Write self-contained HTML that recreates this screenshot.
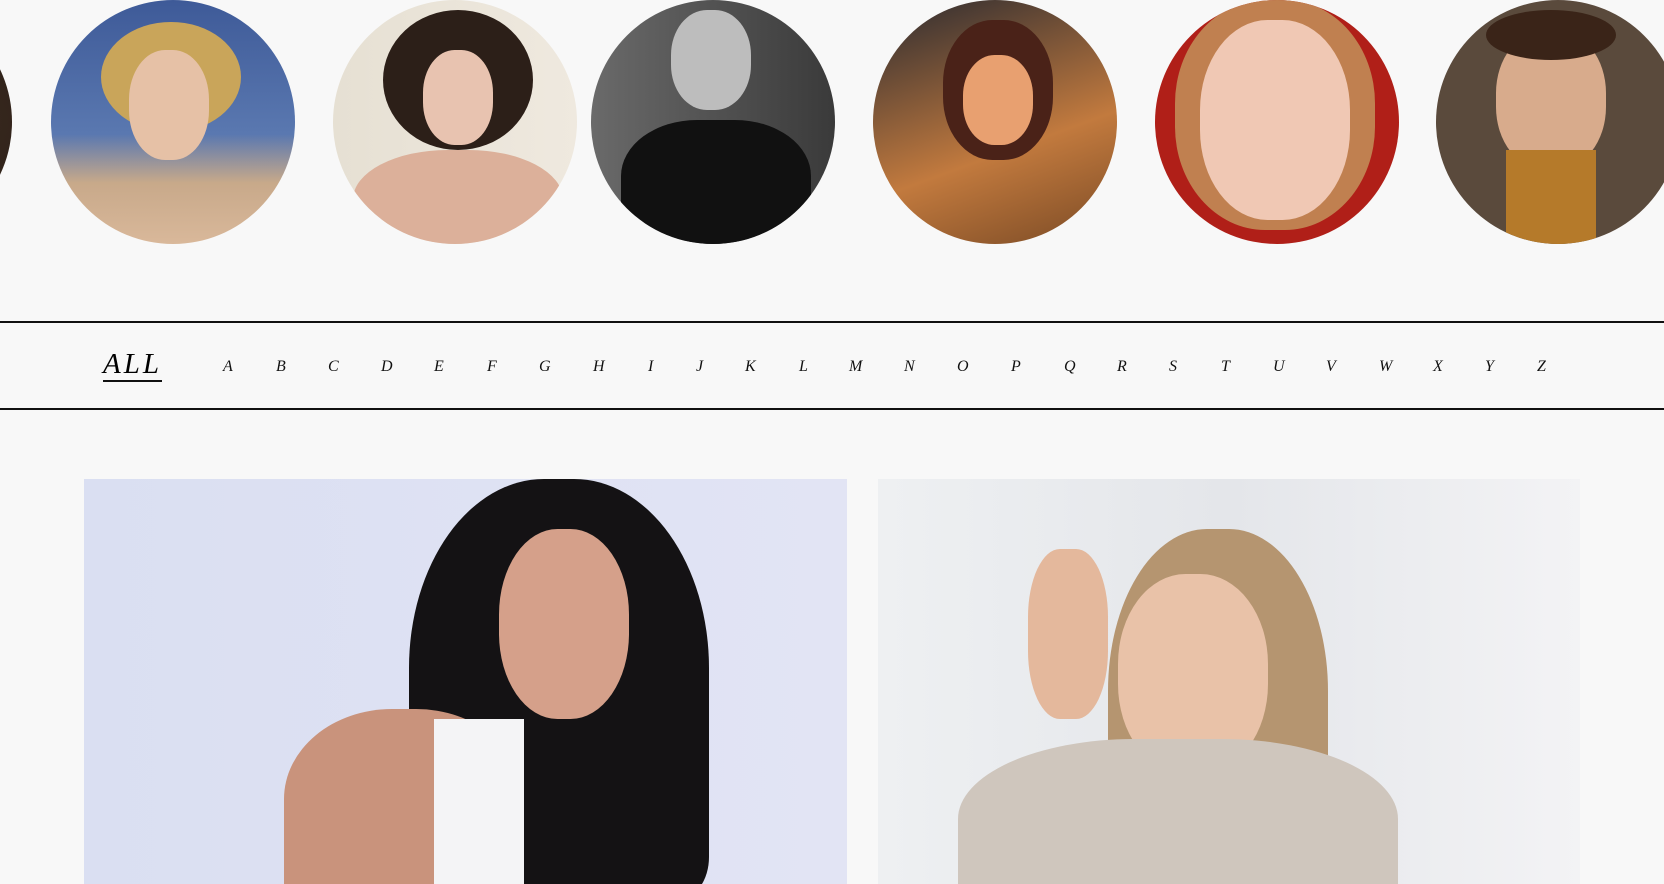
<!DOCTYPE html>
<html><head><meta charset="utf-8"><style>
html,body{margin:0;padding:0;width:1664px;height:884px;overflow:hidden;background:#f8f8f8;font-family:"Liberation Serif",serif;position:relative}
.c{position:absolute;top:0;width:244px;height:244px;border-radius:50%;overflow:hidden}
.line{position:absolute;left:0;width:1664px;height:2px;background:#111}
.nav{position:absolute;top:358px;font-style:italic;font-size:16px;color:#111;line-height:18px}
.all{position:absolute;left:103px;top:348px;font-size:29px;font-style:italic;letter-spacing:3px;border-bottom:2px solid #111;line-height:32px}
.img{position:absolute;top:479px;height:405px;overflow:hidden}
</style></head><body>
<div class="c" style="left:-232px;background:radial-gradient(circle at 80% 50%,#3a2a20,#1a120c)"></div>
<div class="c" style="left:51px;background:linear-gradient(180deg,#3e5a98 0%,#5a78b0 55%,#c8a98a 75%,#d9b89a 100%)">
 <div style="position:absolute;left:50px;top:22px;width:140px;height:110px;border-radius:50%;background:#c9a55a"></div>
 <div style="position:absolute;left:78px;top:50px;width:80px;height:110px;border-radius:45%;background:#e6c1a6"></div></div>
<div class="c" style="left:333px;background:linear-gradient(90deg,#e6e0d3,#efe9df)">
 <div style="position:absolute;left:50px;top:10px;width:150px;height:140px;border-radius:50%;background:#2c1f18"></div>
 <div style="position:absolute;left:90px;top:50px;width:70px;height:95px;border-radius:45%;background:#e8c3b0"></div>
 <div style="position:absolute;left:20px;top:150px;width:210px;height:110px;border-radius:45%;background:#dcb09a"></div></div>
<div class="c" style="left:591px;background:linear-gradient(90deg,#6a6a6a,#3a3a3a)">
 <div style="position:absolute;left:30px;top:120px;width:190px;height:140px;border-radius:40%;background:#111"></div>
 <div style="position:absolute;left:80px;top:10px;width:80px;height:100px;border-radius:45%;background:#bdbdbd"></div></div>
<div class="c" style="left:873px;background:linear-gradient(160deg,#2a2a30,#c27a3e 60%,#7a4a25)">
 <div style="position:absolute;left:70px;top:20px;width:110px;height:140px;border-radius:45%;background:#4a2218"></div>
 <div style="position:absolute;left:90px;top:55px;width:70px;height:90px;border-radius:45%;background:#e8a070"></div></div>
<div class="c" style="left:1155px;background:#b01f18">
 <div style="position:absolute;left:20px;top:0;width:200px;height:230px;border-radius:45%;background:#c08050"></div>
 <div style="position:absolute;left:45px;top:20px;width:150px;height:200px;border-radius:45%;background:#f0c8b4"></div></div>
<div class="c" style="left:1436px;background:#5a4a3c">
 <div style="position:absolute;left:60px;top:30px;width:110px;height:140px;border-radius:45%;background:#d8ab8c"></div>
 <div style="position:absolute;left:50px;top:10px;width:130px;height:50px;border-radius:50%;background:#3a2418"></div>
 <div style="position:absolute;left:70px;top:150px;width:90px;height:100px;background:#b57a2a"></div></div>
<div class="line" style="top:321px"></div>
<div class="line" style="top:408px"></div>
<div class="all">ALL</div>
<div class="nav" style="left:223px">A</div><div class="nav" style="left:276px">B</div><div class="nav" style="left:328px">C</div><div class="nav" style="left:381px">D</div><div class="nav" style="left:434px">E</div><div class="nav" style="left:487px">F</div><div class="nav" style="left:539px">G</div><div class="nav" style="left:593px">H</div><div class="nav" style="left:648px">I</div><div class="nav" style="left:696px">J</div><div class="nav" style="left:745px">K</div><div class="nav" style="left:799px">L</div><div class="nav" style="left:849px">M</div><div class="nav" style="left:904px">N</div><div class="nav" style="left:957px">O</div><div class="nav" style="left:1011px">P</div><div class="nav" style="left:1064px">Q</div><div class="nav" style="left:1117px">R</div><div class="nav" style="left:1169px">S</div><div class="nav" style="left:1221px">T</div><div class="nav" style="left:1273px">U</div><div class="nav" style="left:1326px">V</div><div class="nav" style="left:1379px">W</div><div class="nav" style="left:1433px">X</div><div class="nav" style="left:1485px">Y</div><div class="nav" style="left:1537px">Z</div>
<div class="img" style="left:84px;width:763px;background:linear-gradient(90deg,#dadff2,#e2e4f4)">
 <div style="position:absolute;left:325px;top:0;width:300px;height:420px;border-radius:45% 45% 10% 10%;background:#141214"></div>
 <div style="position:absolute;left:415px;top:50px;width:130px;height:190px;border-radius:45%;background:#d5a08a"></div>
 <div style="position:absolute;left:200px;top:230px;width:240px;height:200px;border-radius:45% 45% 0 0;background:#c9937c"></div>
 <div style="position:absolute;left:350px;top:240px;width:90px;height:180px;background:#f4f4f6"></div></div>
<div class="img" style="left:878px;width:702px;background:linear-gradient(90deg,#eef0f2,#e4e6ea 50%,#f3f3f5)">
 <div style="position:absolute;left:230px;top:50px;width:220px;height:360px;border-radius:45% 45% 10% 10%;background:#b59570"></div>
 <div style="position:absolute;left:240px;top:95px;width:150px;height:200px;border-radius:45%;background:#e9c2a8"></div>
 <div style="position:absolute;left:150px;top:70px;width:80px;height:170px;border-radius:40%;background:#e4b89c"></div>
 <div style="position:absolute;left:80px;top:260px;width:440px;height:200px;border-radius:40% 40% 0 0;background:#cfc6bd"></div></div>
</body></html>
